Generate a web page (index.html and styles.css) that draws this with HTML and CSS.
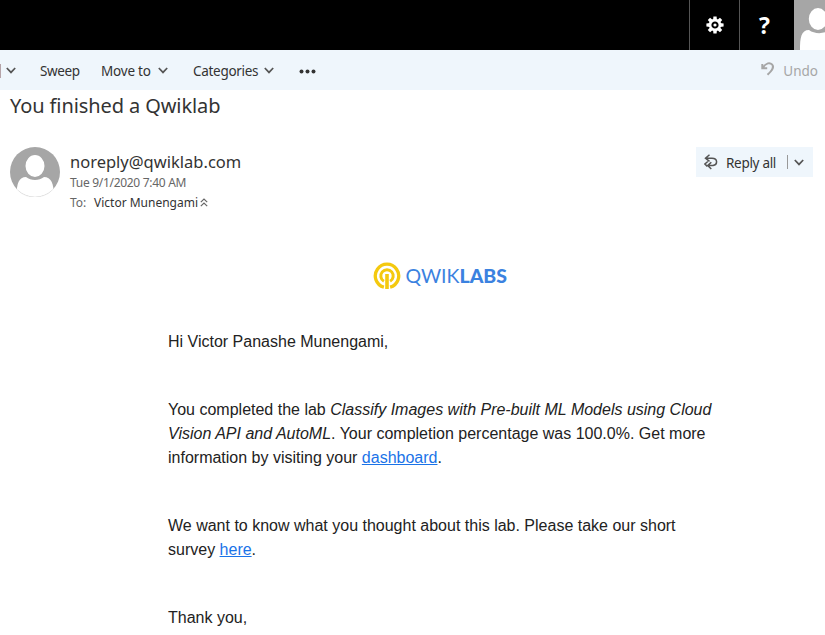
FILE: index.html
```html
<!DOCTYPE html>
<html lang="en">
<head>
<meta charset="utf-8">
<title>You finished a Qwiklab</title>
<link rel="stylesheet" href="styles.css">
</head>
<body>
<header class="topbar">
  <button class="top-button settings" aria-label="Settings">
    <svg width="18" height="18" viewBox="-9 -9 18 18"><g fill="#fff"><path id="tooth" d="M-1.9-5L-1.6-8.6H1.6L1.9-5Z"/><use href="#tooth" transform="rotate(45)"/><use href="#tooth" transform="rotate(90)"/><use href="#tooth" transform="rotate(135)"/><use href="#tooth" transform="rotate(180)"/><use href="#tooth" transform="rotate(225)"/><use href="#tooth" transform="rotate(270)"/><use href="#tooth" transform="rotate(315)"/></g><circle r="4.9" fill="none" stroke="#fff" stroke-width="2.6"/><circle r="1.6" fill="#fff"/></svg>
  </button>
  <button class="top-button help" aria-label="Help">?</button>
  <div class="account">
    <svg width="31" height="50" viewBox="0 0 31 50"><path d="M6 50C6 38 7 30 15 30C20 34 29 34 34 31V50Z" fill="#fff"/><ellipse cx="24" cy="19" rx="10" ry="11.8" fill="#fff" stroke="#a6a6a6" stroke-width="1.6"/></svg>
  </div>
</header>
<nav class="toolbar">
  <span class="edge"></span>
  <svg class="chevron first" width="10" height="7" viewBox="0 0 10 7"><path d="M.8 1L5 5.4L9.2 1"/></svg>
  <span class="command sweep">Sweep</span>
  <span class="command move">Move to</span>
  <svg class="chevron" width="10" height="7" viewBox="0 0 10 7"><path d="M.8 1L5 5.4L9.2 1"/></svg>
  <span class="command categories">Categories</span>
  <svg class="chevron" width="10" height="7" viewBox="0 0 10 7"><path d="M.8 1L5 5.4L9.2 1"/></svg>
  <svg class="more" width="17" height="5" viewBox="0 0 17 5" fill="#333"><circle cx="2.5" cy="2.5" r="2"/><circle cx="8.5" cy="2.5" r="2"/><circle cx="14.5" cy="2.5" r="2"/></svg>
  <span class="undo">
    <svg width="14" height="14" viewBox="0 0 14 14" fill="none" stroke="#a6a6a6" stroke-width="2"><path d="M1.3 2V6.3H6.2M1.8 5.8C5 .6 9 .3 11 2.4C14 5.6 10 9.5 6.5 12.8"/></svg>
    <span>Undo</span>
  </span>
</nav>
<main>
  <h1>You finished a Qwiklab</h1>
  <section class="message-head">
    <svg class="avatar" width="50" height="50" viewBox="0 0 50 50"><defs><clipPath id="round"><circle cx="25" cy="25" r="25"/></clipPath></defs><g clip-path="url(#round)"><path fill="#a6a6a6" d="M0 0H50V50H0Z"/><path fill="#fff" d="M6.5 50C6.5 36 9 30 16 30C21 34 29 34 34 30C41 30 44 36 44 50Z"/><ellipse cx="25" cy="19" rx="10.3" ry="11.8" fill="#fff" stroke="#a6a6a6" stroke-width="1.6"/></g><path d="M8.5 43.8A24.6 24.6 0 0 0 41.5 43.8" fill="none" stroke="#ddd" stroke-width=".6"/></svg>
    <div class="details">
      <div class="sender">noreply@qwiklab.com</div>
      <div class="date">Tue 9/1/2020 7:40 AM</div>
      <div class="recipient"><span class="to">To:</span><span class="name">Victor Munengami</span><svg width="8" height="9" viewBox="0 0 8 9" fill="none" stroke="#666" stroke-width="1.2"><path d="M.8 4.1L4 1L7.2 4.1M.8 8.1L4 5L7.2 8.1"/></svg></div>
    </div>
    <div class="reply">
      <svg width="14" height="16" viewBox="0 0 14 16" fill="none" stroke="#555" stroke-width="1.5"><path d="M5.5 .8L1.5 4.2L5.5 7.4M1.8 4.2H8C14 4.2 13.8 10.7 9 11.6H5M7.3 8.2L3.7 11.6L7.3 15M3.8 7.5L.9 10L3.3 12.4"/></svg>
      <span class="reply-label">Reply all</span>
      <span class="separator"></span>
      <svg class="chevron" width="10" height="7" viewBox="0 0 10 7"><path d="M.8 1L5 5.4L9.2 1"/></svg>
    </div>
  </section>
  <article>
    <div class="logo">
      <svg width="28" height="28" viewBox="0 0 28 28" fill="none" stroke="#f4c90f"><path stroke-width="3.3" d="M10.9 25.2A11.7 11.7 0 1 1 17.1 25.2"/><path stroke-width="3" d="M10.9 19.2A6.2 6.2 0 1 1 17.1 19.2"/><path stroke-width="3.6" d="M14 12V27"/></svg>
      <span class="wordmark"><span class="qwik">QWIK</span><b>LABS</b></span>
    </div>
    <p>Hi Victor Panashe Munengami,</p>
    <p>You completed the lab <i>Classify Images with Pre-built ML Models using Cloud Vision API and AutoML</i>. Your completion percentage was 100.0%. Get more information by visiting your <a href="#">dashboard</a>.</p>
    <p>We want to know what you thought about this lab. Please take our short survey <a href="#">here</a>.</p>
    <p>Thank you,</p>
  </article>
</main>
</body>
</html>
```
FILE: styles.css
```css
* { box-sizing: border-box; }
body { margin: 0; height: 635px; overflow: hidden; background: #fff; color: #333; font-family: "Segoe UI", "Noto Sans", sans-serif; }
svg { display: block; flex: none; }
.topbar { height: 50px; background: #000; display: flex; justify-content: flex-end; }
.top-button { border: 0; border-left: 1px solid #555; background: #000; color: #fff; padding: 0; display: flex; align-items: center; justify-content: center; font: 700 23px "Open Sans", sans-serif; }
.settings { width: 50px; }
.help { width: 55px; padding-right: 5px; }
.account { width: 31px; background: #a6a6a6; }
.toolbar { height: 40px; background: #eff6fc; display: flex; align-items: center; font-size: 13.5px; white-space: nowrap; padding-top: 2px; }
.edge { width: 1px; height: 14px; background: #b5a3a8; }
.chevron { fill: none; stroke: #555; stroke-width: 1.7; margin-top: -2px; }
.first { margin-left: 5px; }
.command { flex: none; }
.sweep { width: 61px; margin-left: 24px; letter-spacing: -.35px; }
.move { width: 57px; letter-spacing: -.2px; }
.categories { width: 71px; margin-left: 25px; letter-spacing: -.3px; }
.more { margin-left: 25px; }
.undo { margin-left: auto; display: flex; align-items: center; gap: 8px; padding-right: 7px; color: #a6a6a6; }
.undo svg { margin-top: -4px; }
h1 { margin: 0; padding-left: 10px; height: 57px; line-height: 31px; font-size: 20px; font-weight: 400; letter-spacing: -.1px; white-space: nowrap; }
.message-head { height: 115px; padding: 0 12px 0 10px; display: flex; align-items: flex-start; }
.details { margin-left: 10px; padding-top: 4px; white-space: nowrap; }
.sender { height: 23px; line-height: 22px; font-size: 16.5px; }
.date { height: 18px; line-height: 18px; font-size: 12px; color: #666; letter-spacing: -.3px; }
.recipient { height: 20px; display: flex; align-items: center; font-size: 12px; }
.to { width: 24px; color: #666; }
.name { width: 106px; }
.reply { width: 117px; height: 30px; margin-left: auto; padding-left: 8px; display: flex; align-items: center; background: #eff6fc; font-size: 13.5px; white-space: nowrap; }
.reply-label { width: 61px; margin-left: 8px; padding-top: 2px; letter-spacing: -.3px; }
.separator { width: 1px; height: 14px; margin-right: 6px; background: #999; }
.reply .chevron { margin-top: 1px; }
article { width: 550px; margin-left: 168px; color: #222; font: 16px/24px "Liberation Sans", Arial, sans-serif; }
.logo { display: flex; height: 28px; justify-content: center; align-items: center; gap: 5px; margin-bottom: 40px; }
.wordmark { width: 108px; color: #3b82e0; font: 400 19.5px/26px Lato, sans-serif; white-space: nowrap; }
.wordmark b { font-weight: 900; }
p { margin: 0 0 44px; }
a { color: #1a73e8; text-decoration: underline; }
```
